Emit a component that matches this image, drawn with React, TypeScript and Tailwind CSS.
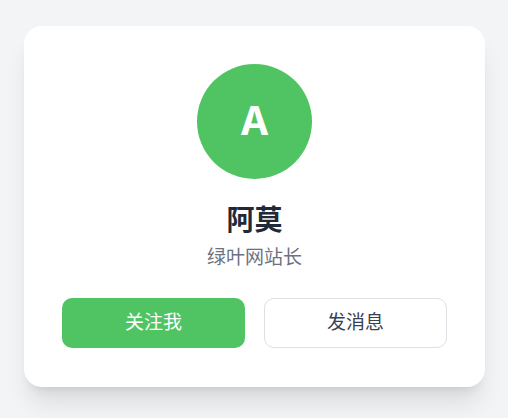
export default function App() {
  return (
    <div
      className="min-h-screen bg-[#f3f4f6] pt-[26px] pl-[24px]"
      style={{ fontFamily: 'Inter, "Noto Sans CJK SC", sans-serif' }}
    >
      <div className="w-[461px] h-[361px] bg-white rounded-[18px] shadow-xl px-[38px] pt-[38px] flex flex-col items-center">
        <div className="w-[115px] h-[115px] rounded-full bg-[#50c463] flex items-center justify-center text-white text-[39px] font-bold">
          A
        </div>
        <h1 className="mt-[24px] text-[28px] leading-[34px] font-bold text-[#1f2937]">
          阿莫
        </h1>
        <p className="mt-[7px] text-[19px] leading-[28px] text-[#6b7280]">绿叶网站长</p>
        <div className="mt-[26px] w-full grid grid-cols-2 gap-[19px]">
          <button className="h-[50px] rounded-[10px] bg-[#50c463] text-white text-[19px]">
            关注我
          </button>
          <button className="h-[50px] rounded-[10px] bg-white border border-[#dcdfe3] text-[#374151] text-[19px]">
            发消息
          </button>
        </div>
      </div>
    </div>
  );
}
